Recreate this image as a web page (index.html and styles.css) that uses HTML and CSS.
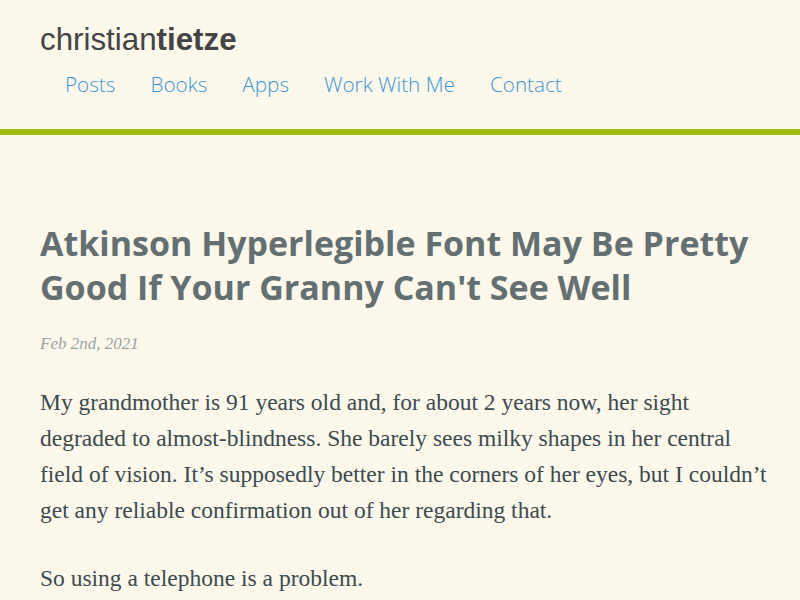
FILE: index.html
```html
<!DOCTYPE html>
<html lang="en">
<head>
<meta charset="utf-8">
<title>christiantietze</title>
<link rel="stylesheet" href="styles.css">
</head>
<body>
<header class="site-header">
  <div class="logo"><span class="logo-light">christian</span><span class="logo-bold">tietze</span></div>
  <nav class="nav">
    <a href="#">Posts</a>
    <a href="#">Books</a>
    <a href="#">Apps</a>
    <a href="#">Work With Me</a>
    <a href="#">Contact</a>
  </nav>
</header>
<main class="content">
  <h1 class="title">Atkinson Hyperlegible Font May Be Pretty Good If Your Granny Can't See Well</h1>
  <div class="date">Feb 2nd, 2021</div>
  <p class="lead">My grandmother is 91 years old and, for about 2 years now, her sight<br>
  degraded to almost-blindness. She barely sees milky shapes in her central<br>
  field of vision. It’s supposedly better in the corners of her eyes, but I couldn’t<br>
  get any reliable confirmation out of her regarding that.</p>
  <p>So using a telephone is a problem.</p>
</main>
</body>
</html>
```

FILE: styles.css
```css
html, body {
  margin: 0;
  padding: 0;
  background: #fcf8ec;
}
body {
  font-family: "Liberation Serif", serif;
}
.site-header {
  border-bottom: 6px solid #9dbb0a;
  padding: 20px 40px 0 40px;
  height: 109px;
  box-sizing: content-box;
}
.logo {
  font-family: "Liberation Sans", Arial, sans-serif;
  font-size: 31.3px;
  color: #444444;
  line-height: 40px;
}
.logo-bold { font-weight: bold; }
.nav {
  display: flex;
  gap: 35px;
  padding-left: 25px;
  margin-top: 4px;
}
.nav a {
  font-family: "Open Sans", sans-serif;
  font-weight: 300;
  font-size: 20.7px;
  color: #3d95d3;
  text-decoration: none;
  line-height: 40px;
}
.content {
  padding: 0 0 0 40px;
}
.title {
  font-family: "Open Sans", sans-serif;
  font-weight: 700;
  font-size: 34px;
  line-height: 44px;
  color: #636f70;
  margin: 86px 40px 0 0;
}
.date {
  font-family: "Liberation Serif", serif;
  font-style: italic;
  font-size: 17px;
  color: #9aa3a3;
  margin-top: 23px;
  line-height: 24px;
}
p {
  font-size: 23.5px;
  line-height: 36px;
  color: #3d4a4f;
  margin: 28px 0 32px 0;
}
p + p { margin-top: 32px; }
```
